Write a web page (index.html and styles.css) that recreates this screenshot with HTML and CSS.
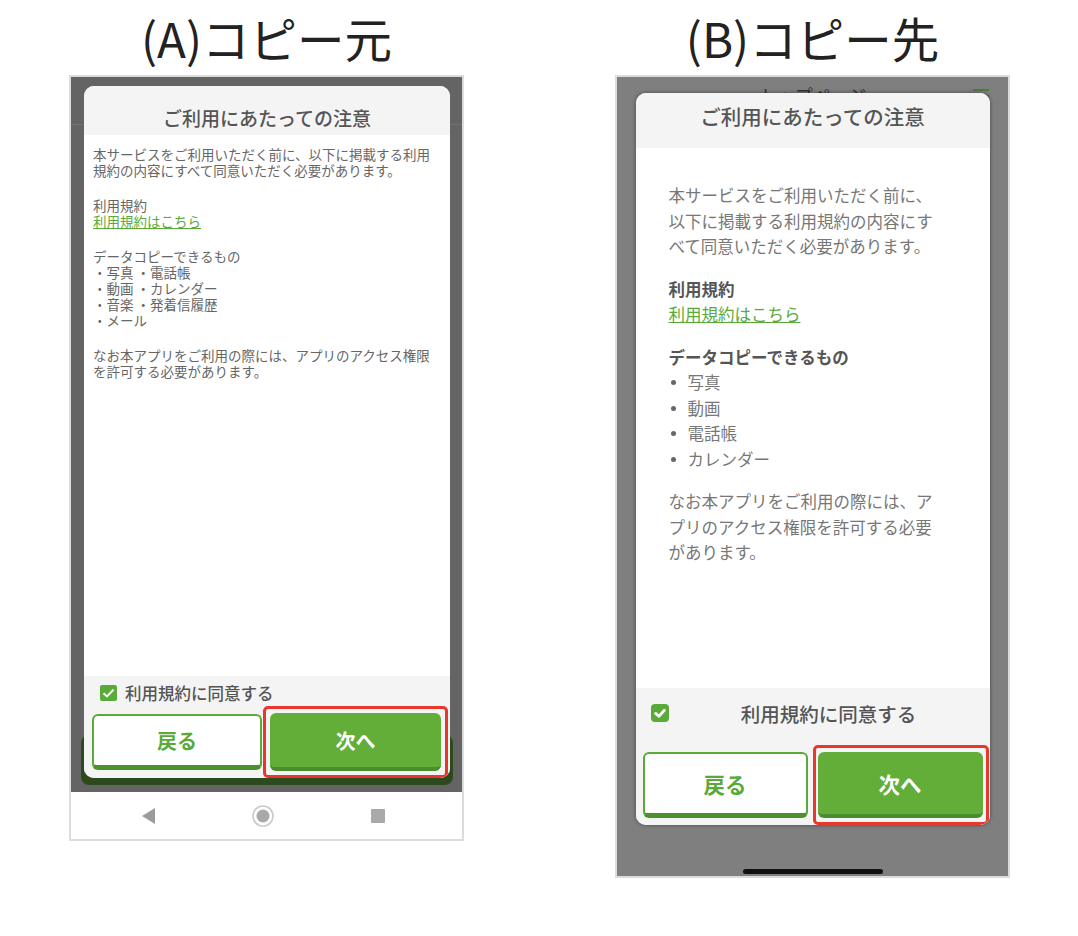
FILE: index.html
```html
<!DOCTYPE html>
<html lang="ja">
<head>
<meta charset="utf-8">
<title>コピー元 / コピー先</title>
<link rel="stylesheet" href="styles.css">
</head>
<body>
<div class="page">
  <section class="col">
    <h1 class="title">(A)コピー元</h1>
    <div class="phone android">
      <div class="screen">
        <div class="app-btn"></div>
        <div class="modal">
          <div class="modal-head">ご利用にあたっての注意</div>
          <div class="modal-body">
            <p>本サービスをご利用いただく前に、以下に掲載する利用<br>規約の内容にすべて同意いただく必要があります。</p>
            <p>利用規約<br><a class="link">利用規約はこちら</a></p>
            <p>データコピーできるもの<br>・写真 ・電話帳<br>・動画 ・カレンダー<br>・音楽 ・発着信履歴<br>・メール</p>
            <p>なお本アプリをご利用の際には、アプリのアクセス権限<br>を許可する必要があります。</p>
          </div>
          <div class="modal-foot">
            <div class="agree">
              <svg class="check" width="17" height="16" viewBox="0 0 17 16"><rect width="17" height="16" rx="2" fill="#5aaa3a"/><path d="M3.5 8.2 L7 11.4 L13.5 4.6" stroke="#fff" stroke-width="2" fill="none"/></svg>
              <span class="txt">利用規約に同意する</span>
            </div>
            <div class="btns">
              <div class="btn back">戻る</div>
              <div class="hl"><div class="btn next">次へ</div></div>
            </div>
          </div>
        </div>
      </div>
      <div class="navbar">
        <svg width="13" height="16" viewBox="0 0 13 16"><path d="M13 0 L0 8 L13 16 Z" fill="#9c9c9c"/></svg>
        <svg width="22" height="22" viewBox="0 0 22 22"><circle cx="11" cy="11" r="10" fill="none" stroke="#cacaca" stroke-width="1.6"/><circle cx="11" cy="11" r="6.5" fill="#a9a9a9"/></svg>
        <svg width="14" height="14" viewBox="0 0 14 14"><rect width="14" height="14" rx="1" fill="#a9a9a9"/></svg>
      </div>
    </div>
  </section>

  <section class="col">
    <h1 class="title">(B)コピー先</h1>
    <div class="phone ios">
      <div class="screen">
        <div class="app-title">トップページ</div>
        <div class="app-menu"><span></span><span></span><span></span></div>
        <div class="modal">
          <div class="modal-head">ご利用にあたっての注意</div>
          <div class="modal-body">
            <p>本サービスをご利用いただく前に、<br>以下に掲載する利用規約の内容にす<br>べて同意いただく必要があります。</p>
            <p><b>利用規約</b><br><a class="link">利用規約はこちら</a></p>
            <div class="list-block">
              <b>データコピーできるもの</b>
              <ul class="list">
                <li>写真</li>
                <li>動画</li>
                <li>電話帳</li>
                <li>カレンダー</li>
              </ul>
            </div>
            <p>なお本アプリをご利用の際には、ア<br>プリのアクセス権限を許可する必要<br>があります。</p>
          </div>
          <div class="modal-foot">
            <div class="agree">
              <svg class="check" width="18" height="18" viewBox="0 0 18 18"><rect width="18" height="18" rx="4" fill="#5aaa3a"/><path d="M4.6 9.4 L7.9 12.2 L13.4 6.3" stroke="#fff" stroke-width="2.8" stroke-linecap="round" stroke-linejoin="round" fill="none"/></svg>
              <span class="txt">利用規約に同意する</span>
            </div>
            <div class="btns">
              <div class="btn back">戻る</div>
              <div class="hl"><div class="btn next">次へ</div></div>
            </div>
          </div>
        </div>
        <div class="home"></div>
      </div>
    </div>
  </section>
</div>
</body>
</html>
```

FILE: styles.css
```css
* { box-sizing: border-box; }
html, body { margin: 0; padding: 0; background: #fff; }
body {
  font-family: "Noto Sans CJK JP", "Noto Sans", sans-serif;
  width: 1078px;
  height: 936px;
  overflow: hidden;
}
.page { display: flex; gap: 151px; padding-left: 69px; }
.col { width: 395px; display: flex; flex-direction: column; }
.title {
  margin: 0;
  height: 75px;
  line-height: 75px;
  font-size: 47.5px;
  font-weight: 400;
  color: #222;
  text-align: center;
  white-space: nowrap;
}

/* phone frames */
.phone { border: 2px solid #dcdcdc; display: flex; flex-direction: column; }
.screen { position: relative; }

.modal {
  position: relative;
  z-index: 1;
  background: #fff;
  border-radius: 10px;
  overflow: hidden;
  display: flex;
  flex-direction: column;
}
.modal-head { background: #f4f4f4; text-align: center; color: #555; font-weight: 500; white-space: nowrap; }
.modal-body { flex: 1; background: #fff; white-space: nowrap; }
.modal-body p { margin: 0; }
.link { color: #5aaa3a; text-decoration: underline; }
.modal-foot { background: #f4f4f4; }
.agree { display: flex; align-items: center; color: #555; font-weight: 500; white-space: nowrap; }
.check { flex: none; display: block; }
.btns { display: flex; align-items: center; }
.btn { display: flex; align-items: center; justify-content: center; border-radius: 6px; font-weight: 700; }
.back { background: #fff; color: #5aaa3a; border: 2px solid #5aaa3a; border-bottom: 5px solid #4b922f; }
.next { background: #62ae38; color: #fff; border-bottom: 4px solid #4a8d2d; width: 100%; height: 100%; }
.hl { border: 3px solid #e8372b; border-radius: 5px; }

/* (A) android */
.android { height: 766px; }
.android .screen {
  height: 715px;
  padding: 9px 12px 0 13px;
  background:
    linear-gradient(to bottom, transparent 47px, #737373 47px, #737373 48px, transparent 48px),
    #646464;
}
.app-btn {
  position: absolute;
  left: 10px;
  right: 9px;
  top: 658px;
  height: 50px;
  background: #2c4a1e;
  border-radius: 8px;
}
.android .modal { height: 692px; }
.android .modal-head { height: 49px; padding-top: 21px; font-size: 19px; line-height: 22px; }
.android .modal-body { padding: 11px 10px 0 9px; font-size: 13.5px; line-height: 16px; color: #666; }
.android .modal-body p { margin-bottom: 19px; }
.android .modal-foot { padding: 7px 2px 0 8px; }
.android .agree { height: 20px; padding-left: 8px; gap: 8px; font-size: 16.5px; }
.android .btns { margin-top: 3px; gap: 1px; }
.android .back { width: 170px; height: 56px; font-size: 20px; }
.android .hl { width: 185px; height: 72px; padding: 4px; }
.android .next { font-size: 20px; }
.navbar {
  height: 47px;
  background: #fff;
  display: flex;
  align-items: center;
  justify-content: center;
  gap: 97px;
  padding-right: 7px;
}

/* (B) ios */
.ios { height: 803px; }
.ios .screen {
  flex: 1;
  background: #7f7f7f;
  padding: 16px 18px 0;
  display: flex;
  flex-direction: column;
  align-items: center;
}
.app-title {
  position: absolute;
  top: 6px;
  left: 0;
  right: 0;
  text-align: center;
  font-size: 18px;
  line-height: 24px;
  color: #333;
}
.app-menu {
  position: absolute;
  top: 12px;
  right: 19px;
  width: 16px;
  display: flex;
  flex-direction: column;
  gap: 4px;
}
.app-menu span { display: block; height: 2px; background: #4f7a3a; }
.ios .modal { width: 354px; height: 732px; box-shadow: 0 0 4px rgba(0, 0, 0, 0.45); }
.ios .modal-head { height: 55px; padding-top: 11px; font-size: 20.5px; line-height: 24px; }
.ios .modal-body { padding: 35px 0 0 33px; font-size: 16.5px; line-height: 25.5px; color: #777; }
.ios .modal-body p, .ios .list-block { margin-bottom: 17px; }
.ios b { color: #555; font-weight: 700; }
.list { margin: 0; padding: 0; list-style: none; }
.list li { display: flex; align-items: center; }
.list li::before {
  content: "";
  width: 5px;
  height: 5px;
  border-radius: 50%;
  background: #666;
  margin: 0 12px 0 2px;
}
.ios .modal-foot { padding: 14px 1px 0 7px; }
.ios .agree { height: 22px; padding-left: 8px; font-size: 19.5px; }
.ios .agree .txt { flex: 1; text-align: center; }
.ios .btns { margin-top: 21px; gap: 5px; }
.ios .back { width: 165px; height: 66px; font-size: 21.5px; }
.ios .hl { width: 176px; height: 80px; padding: 4px 3px 4px 2px; }
.ios .next { font-size: 21.5px; }
.home { width: 140px; height: 5px; border-radius: 3px; background: #111; margin-top: 44px; }
```
